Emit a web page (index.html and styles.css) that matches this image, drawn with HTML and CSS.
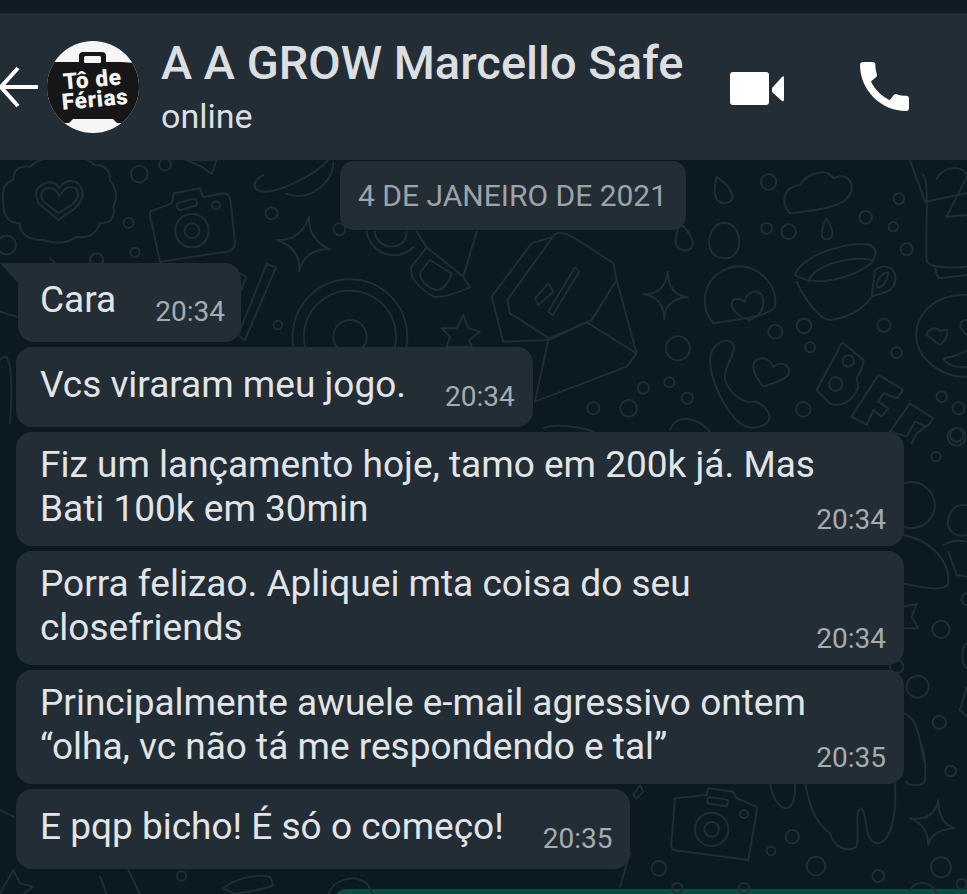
FILE: index.html
```html
<!DOCTYPE html>
<html lang="pt">
<head>
<meta charset="utf-8">
<title>A A GROW Marcello Safe</title>
<link rel="stylesheet" href="styles.css">
</head>
<body>
<div class="phone">
  <div class="status"></div>
  <header class="bar">
    <svg class="back" viewBox="0 0 38 44" aria-hidden="true"><path d="M38 22H3M18 3 1 22l17 19"/></svg>
    <svg class="avatar" viewBox="0 0 92 92" role="img" aria-label="Tô de Férias">
      <defs><clipPath id="round"><circle cx="46" cy="46" r="46"/></clipPath></defs>
      <g clip-path="url(#round)">
        <rect width="92" height="92" fill="#f6f6f6"/>
        <path class="case" d="M-2 21H32V15Q32 11 36 11H55Q59 11 59 15V21H94V74L82 78 78 82H70L66 78H26L22 82H14L10 78-2 74Z"/>
        <rect x="37" y="15" width="17" height="7" rx="1.5" fill="#f6f6f6"/>
        <path d="M60 20 70 13 84 11 88 22Z" fill="#f6f6f6"/>
        <g transform="rotate(-5 46 46)">
          <text class="logo" x="46" y="46">Tô de</text>
          <text class="logo" x="47" y="66">Férias</text>
        </g>
      </g>
    </svg>
    <div class="who">
      <div class="name">A A GROW Marcello Safe</div>
      <div class="online">online</div>
    </div>
    <svg class="video" viewBox="0 0 54 33" aria-hidden="true"><rect width="39" height="33" rx="3"/><path d="M42 16 52 5Q54 3 54 6V27Q54 30 52 29L42 20Z"/></svg>
    <svg class="call" viewBox="3 3 18 18" aria-hidden="true"><path d="M20.01 15.38c-1.23 0-2.42-.2-3.53-.56-.35-.12-.74-.03-1.01.24l-1.57 1.97c-2.83-1.35-5.48-3.9-6.89-6.83l1.95-1.66c.27-.28.35-.67.24-1.02-.37-1.11-.56-2.3-.56-3.53 0-.54-.45-.99-.99-.99H4.19C3.65 3 3 3.24 3 3.99 3 13.28 10.73 21 20.01 21c.71 0 .99-.63.99-1.18v-3.45c0-.54-.45-.99-.99-.99z"/></svg>
  </header>
  <main class="chat">
    <svg class="wallpaper" viewBox="0 0 967 734" aria-hidden="true">
      <g transform="translate(0 -160)">
        <g transform="translate(0 160) scale(.3333)">
          <path d="M10 130Q0 70 40 60 40 15 90 20 130-15 180-5 240-25 285 15 330 15 330 60 360 100 340 140 350 190 300 190 280 240 230 230 190 260 130 240 60 240 60 190 10 190 10 130Z"/>
          <path d="M175 180 115 130Q95 85 135 70 165 60 178 85 200 50 235 70 265 105 225 145Z"/>
          <path d="M175 160 128 122Q115 95 140 85 165 80 178 108 200 70 228 85 245 110 215 135Z"/>
          <circle cx="418" cy="42" r="25"/><circle cx="495" cy="14" r="18"/><circle cx="386" cy="188" r="15"/><circle cx="405" cy="277" r="14"/><circle cx="20" cy="255" r="28"/><circle cx="290" cy="300" r="20"/>
          <path d="M450 155 515 130 522 100 600 85 610 112 670 100Q690 100 692 125L705 250Q705 270 680 275L480 305Q468 250 455 190Q448 165 450 155Z"/>
          <rect x="530" y="122" width="62" height="22" rx="10" transform="rotate(-15 561 133)"/>
          <circle cx="576" cy="212" r="50"/><circle cx="576" cy="212" r="22"/><circle cx="648" cy="136" r="12"/>
          <path d="M830 240Q900 245 927 170Q925 240 990 268Q915 265 897 335Q905 265 830 240Z"/>
          <path d="M858 100C920 130 1000 70 1000 10M790 45C760 60 750 90 790 95 840 100 950 40 985 0"/>
          <circle cx="815" cy="160" r="18"/><circle cx="1018" cy="208" r="18"/><circle cx="834" cy="495" r="13"/>
          <path d="M560 0 650 0 635 42 605 20ZM800 312 828 322 735 540 715 525ZM720 340 738 350 725 390"/>
          <circle cx="1050" cy="530" r="172"/><circle cx="1050" cy="530" r="138"/><circle cx="1050" cy="530" r="50"/>
          <path d="M0 455 50 470M0 600C30 560 40 640 30 790M150 295 165 310"/>
        </g>
        <g transform="translate(230 160) scale(.3333)">
          <path d="M410 215C420 280 500 310 550 262M530 215C530 250 500 265 470 258 445 250 435 230 435 215M560 215 590 262 700 350 740 215M590 262 545 320C535 345 560 380 610 410 640 415 690 395 720 382L700 350"/>
          <path d="M600 300 572 335C565 355 590 385 620 390 640 390 655 370 665 340Z"/>
          <path d="M700 465 715 505 750 515 718 540 725 560H650L660 530 635 505 680 505Z"/>
        </g>
        <g transform="translate(480 160) scale(.3333)">
          <path d="M225 222C250 210 265 220 400 310L410 360 335 480 208 535 90 460 82 420Z"/>
          <path d="M215 232 155 250 35 410 70 545 205 540"/>
          <path d="M410 360 470 580 320 487 205 540 165 725 440 620 470 580"/>
          <path d="M165 415 205 370 220 395 175 435ZM205 455 285 322 298 335 218 465Z"/>
          <path d="M490 403Q555 405 563 335Q565 405 625 412Q555 415 553 478Q550 410 490 403Z"/>
          <path d="M710 50C700 90 700 130 735 130 770 125 765 90 710 50ZM600 190C580 240 580 270 615 272 650 270 645 230 600 190ZM1040 175C1020 215 1020 240 1042 238 1065 235 1060 210 1040 175Z"/>
          <path d="M732 188C700 190 680 230 690 265 700 300 760 310 775 265 785 220 765 190 732 188Z"/>
          <circle cx="866" cy="66" r="23"/><circle cx="860" cy="205" r="16"/><circle cx="926" cy="215" r="22"/><circle cx="1157" cy="172" r="19"/><circle cx="1257" cy="116" r="16"/><circle cx="1240" cy="200" r="14"/><circle cx="1280" cy="268" r="18"/>
          <path d="M930 160C900 130 910 80 960 75 980 40 1040 20 1060 55 1110 30 1140 90 1090 125 1060 145 980 155 930 160Z"/>
          <path d="M945 345C960 290 1100 240 1170 255 1195 265 1190 300 1160 320 1100 360 1000 380 945 345ZM985 365C1000 320 1100 285 1175 300M950 365C975 420 1020 480 1050 480 1100 475 1150 450 1175 410L1185 330C1230 300 1260 340 1240 380 1225 400 1200 400 1175 410M1190 380C1190 355 1215 330 1225 340 1220 370 1200 390 1190 380Z"/>
          <path d="M700 490C650 430 675 340 760 320 840 310 895 380 885 440 870 470 760 480 700 490Z"/>
          <path d="M808 480C770 470 745 440 760 420 780 410 790 425 795 425 800 395 830 385 845 405 860 440 840 470 808 480Z"/>
          <circle cx="886" cy="515" r="21"/><circle cx="972" cy="498" r="22"/><circle cx="990" cy="562" r="15"/><circle cx="1212" cy="496" r="20"/><circle cx="1250" cy="578" r="16"/><circle cx="594" cy="565" r="36"/><circle cx="490" cy="684" r="17"/><circle cx="568" cy="667" r="15"/><circle cx="622" cy="715" r="17"/><circle cx="340" cy="745" r="18"/><circle cx="446" cy="745" r="25"/><circle cx="970" cy="748" r="22"/><circle cx="1385" cy="710" r="16"/><circle cx="1436" cy="745" r="18"/><circle cx="1430" cy="825" r="20"/>
          <path d="M690 600C690 550 750 520 762 560 760 600 730 620 735 660 745 690 780 730 815 725L830 725C860 740 880 770 860 790 830 810 790 810 760 770 720 720 690 650 690 600Z"/>
          <path d="M850 680C810 630 810 595 850 595 870 600 875 610 880 620 910 600 935 620 925 645 905 665 880 670 850 680Z"/>
          <path d="M1090 550 1150 600C1155 620 1130 650 1130 655L1135 680C1120 725 1080 745 1050 730L1010 690 1075 570Q1080 550 1090 550Z"/>
          <circle cx="1105" cy="603" r="17"/><circle cx="1067" cy="672" r="20"/>
          <path d="M1195 645 1270 690 1250 715 1210 700 1195 725 1225 745 1205 770 1180 750 1160 795 1115 770Z"/>
          <path d="M1290 730 1360 775 1340 800 1305 785 1280 830 1230 815Z"/>
          <path d="M1330 45C1350 70 1335 200 1340 300 1345 325 1400 325 1461 320M1290 0 1335 125 1461 100M1370 55C1400 10 1461 20 1461 50L1400 170 1461 165M1365 325 1375 355 1461 345"/>
          <path d="M1461 405C1360 400 1300 470 1310 540 1320 610 1400 655 1461 650"/>
          <path d="M1340 525C1340 510 1370 495 1380 515 1410 495 1410 530 1380 555ZM1461 480C1440 480 1430 500 1461 525M1390 595C1420 590 1440 585 1461 570M1390 595C1400 615 1430 625 1461 620"/>
          <path d="M570 810C590 760 650 770 690 815M190 805C220 790 300 800 340 815"/>
        </g>
        <g transform="translate(880 420) scale(.3333)">
          <circle cx="230" cy="50" r="27"/><circle cx="168" cy="110" r="14"/><circle cx="183" cy="628" r="26"/><circle cx="50" cy="740" r="20"/><circle cx="113" cy="800" r="33"/><circle cx="178" cy="907" r="20"/>
          <path d="M70 190C120 175 165 210 165 260 160 310 110 335 70 320M261 255C215 250 200 290 205 320 215 345 240 350 261 345"/>
          <path d="M70 345C150 360 210 420 205 490 200 515 130 505 70 490M190 375C215 360 240 360 261 365M205 395 230 465 261 470"/>
          <path d="M70 560 110 552 95 590 115 625H70M261 520C240 520 240 555 261 555M261 670C245 680 240 730 261 745M261 800 240 870 261 890M70 880C110 890 120 950 130 1020M95 70 110 40 150 10"/>
        </g>
        <g transform="translate(600 740) scale(.3333)">
          <path d="M225 175 320 165 325 145 400 155 410 175 470 200Q472 205 470 215L445 360 220 330Q210 325 215 300Z"/>
          <rect x="322" y="175" width="62" height="20" rx="9" transform="rotate(8 353 185)"/>
          <circle cx="335" cy="268" r="50"/><circle cx="335" cy="268" r="22"/><circle cx="432" cy="222" r="12"/>
          <circle cx="177" cy="385" r="22"/><circle cx="577" cy="290" r="20"/><circle cx="513" cy="333" r="13"/><circle cx="648" cy="378" r="28"/><circle cx="835" cy="408" r="18"/><circle cx="1023" cy="382" r="30"/><circle cx="1052" cy="93" r="16"/><circle cx="1085" cy="432" r="15"/><circle cx="232" cy="445" r="16"/><circle cx="432" cy="445" r="16"/>
          <path d="M510 130C525 220 590 235 585 135M615 130C630 200 640 240 690 280 700 320 740 340 770 320 780 270 760 210 785 205 805 230 790 300 830 310 880 310 890 200 885 130"/>
          <path d="M920 125C925 140 970 140 975 120 980 60 970 30 960 0"/>
          <path d="M930 235Q1000 245 1015 180Q1015 250 1065 265Q995 270 985 315Q985 255 930 235Z"/>
          <path d="M100 165 120 135 130 155 110 175ZM930 450C950 420 990 420 1010 460M60 440 90 340"/>
        </g>
        <g transform="translate(0 780) scale(.3333)">
          <path d="M0 340 40 270 60 310 100 320 70 342M0 90 40 110M300 290 320 342M385 270 420 342M670 325C700 300 760 280 810 290L820 315C790 330 740 335 705 342ZM985 342C1000 300 1060 280 1100 310L1120 342"/>
          <circle cx="545" cy="288" r="14"/>
        </g>
      </g>
    </svg>
    <div class="date">4 DE JANEIRO DE 2021</div>
    <div class="msg first"><span class="txt">Cara</span><time class="at">20:34</time></div>
    <div class="msg one"><span class="txt">Vcs viraram meu jogo.</span><time class="at">20:34</time></div>
    <div class="msg wide"><span class="txt">Fiz um lançamento hoje, tamo em 200k já. Mas<br>Bati 100k em 30min</span><time class="at">20:34</time></div>
    <div class="msg wide"><span class="txt">Porra felizao. Apliquei mta coisa do seu<br>closefriends</span><time class="at">20:34</time></div>
    <div class="msg wide"><span class="txt">Principalmente awuele e-mail agressivo ontem<br>“olha, vc não tá me respondendo e tal”</span><time class="at">20:35</time></div>
    <div class="msg one"><span class="txt">E pqp bicho! É só o começo!</span><time class="at">20:35</time></div>
    <div class="sent"></div>
  </main>
</div>
</body>
</html>
```

FILE: styles.css
```css
* { box-sizing: border-box; }
html, body { margin: 0; height: 100%; background: #0b1a21; }
body { overflow: hidden; font-family: Roboto, "Liberation Sans", sans-serif; }
.phone { width: 967px; height: 894px; display: flex; flex-direction: column; overflow: hidden; }
.status { height: 13px; background: #0f1c24; flex: none; }
.bar { height: 147px; flex: none; background: #232d36; display: flex; align-items: center; color: #fff; }
.back { width: 38px; height: 44px; flex: none; margin-top: 1px; fill: none; stroke: #fff; stroke-width: 4; }
.avatar { width: 92px; height: 92px; flex: none; margin-left: 9px; margin-top: 0; }
.case { fill: #161616; }
.logo { font-family: Roboto, sans-serif; font-weight: 900; font-size: 22.5px; letter-spacing: .7px; fill: #f6f6f6; text-anchor: middle; }
.who { margin-left: 22px; width: 569px; flex: none; padding-top: 2px; }
.name { font-size: 47px; font-weight: 500; line-height: 50px; color: #dcdfe2; white-space: nowrap; margin-top: -2px; }
.online { font-size: 34px; line-height: 38px; margin-top: 9px; color: #dcdfe2; }
.video { width: 54px; height: 33px; flex: none; fill: #fff; margin-top: 3px; }
.call { width: 49px; height: 49px; flex: none; fill: #fff; margin-left: 76px; }
.chat { position: relative; flex: 1; display: flex; flex-direction: column; align-items: flex-start; padding: 1px 0 0 16px; overflow: hidden; }
.wallpaper { position: absolute; left: 0; top: 0; width: 967px; height: 734px; fill: none; stroke: #1e2d36; stroke-width: 6; stroke-linejoin: round; stroke-linecap: round; }
.date { position: relative; flex: none; margin: 0 0 33px 324px; height: 69px; padding: 0 19px 0 18px; background: #232d36; border-radius: 14px; color: #9ba4a9; font-size: 30px; line-height: 69px; white-space: nowrap; }
.msg { position: relative; flex: none; display: flex; align-items: flex-end; background: #232d36; border-radius: 16px; color: #e2e5e8; font-size: 37px; line-height: 44px; margin-bottom: 5px; }
.first, .one { height: 80px; padding: 16px 18px 0 24px; gap: 39px; }
.first { margin-left: 2px; height: 79px; padding: 15px 16px 0 22px; border-top-left-radius: 0; }
.first::before { content: ""; position: absolute; left: -18px; top: 0; width: 18px; height: 20px; background: #232d36; clip-path: polygon(0 0, 100% 0, 100% 100%); }
.wide { width: 888px; height: 114px; padding: 11px 18px 0 24px; justify-content: space-between; }
.txt { white-space: nowrap; align-self: flex-start; }
.at { color: #a5acb0; font-size: 28px; line-height: 32px; margin-bottom: 10px; flex: none; }
.one .at, .first .at { margin-bottom: 14px; }
.sent { align-self: flex-end; width: 634px; height: 20px; margin-top: 15px; background: #0a4d43; border-top-left-radius: 14px; flex: none; }
```
